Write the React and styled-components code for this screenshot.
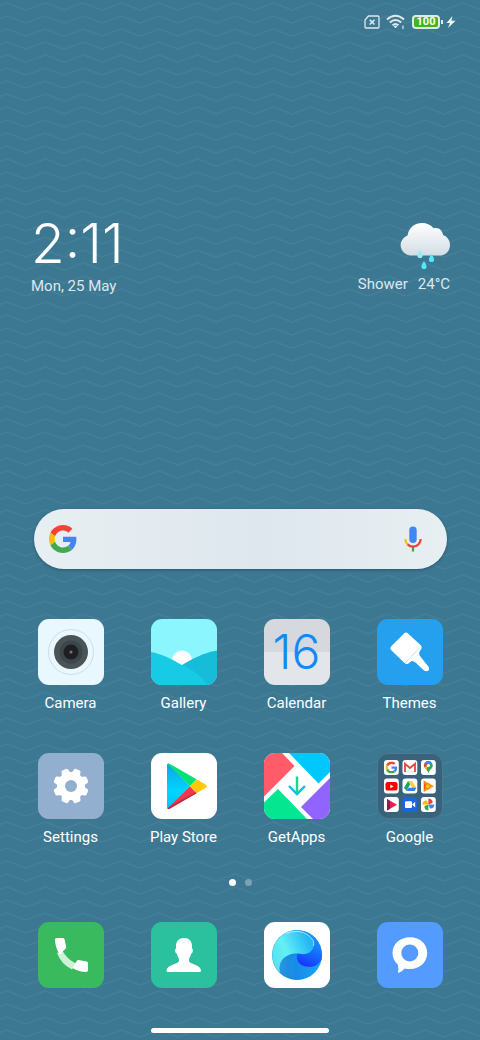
import React from 'react'
import styled, { createGlobalStyle } from 'styled-components'

const zigzag = encodeURIComponent(
  `<svg xmlns="http://www.w3.org/2000/svg" width="38" height="13" viewBox="0 0 38 13">
    <path d="M-12 -3 L7 -10 L26 -3 L45 -10 M-12 10 L7 3 L26 10 L45 3 M-12 23 L7 16 L26 23 L45 16" fill="none" stroke="#9fbccb" stroke-opacity="0.1" stroke-width="1.2"/>
  </svg>`
)

const GlobalStyle = createGlobalStyle`
  * {
    box-sizing: border-box;
  }

  body {
    margin: 0;
    background: #3d7893 url("data:image/svg+xml,${zigzag}");
    color: #fff;
    font-family: Roboto, "Liberation Sans", sans-serif;
  }

  button {
    padding: 0;
    border: none;
    background: none;
    color: inherit;
    font: inherit;
    cursor: pointer;
  }

  svg {
    display: block;
  }
`

const GoogleG = () => (
  <>
    <path fill="#f44336" d="M24 9.5c3.54 0 6.71 1.22 9.21 3.6l6.85-6.85C35.9 2.38 30.47 0 24 0 14.62 0 6.51 5.38 2.56 13.22l7.98 6.19C12.43 13.72 17.74 9.5 24 9.5z" />
    <path fill="#4285f4" d="M46.98 24.55c0-1.57-.15-3.09-.38-4.55H24v9.02h12.94c-.58 2.96-2.26 5.48-4.78 7.18l7.73 6c4.51-4.18 7.09-10.36 7.09-17.65z" />
    <path fill="#fbbc05" d="M10.53 28.59c-.48-1.45-.76-2.99-.76-4.59s.27-3.14.76-4.59l-7.98-6.19C.92 16.46 0 20.12 0 24c0 3.88.92 7.54 2.56 10.78l7.97-6.19z" />
    <path fill="#43a94e" d="M24 48c6.48 0 11.93-2.13 15.89-5.81l-7.73-6c-2.15 1.45-4.92 2.3-8.16 2.3-6.26 0-11.57-4.22-13.47-9.91l-7.98 6.19C6.51 42.62 14.62 48 24 48z" />
  </>
)

const CameraIcon = () => (
  <svg viewBox="0 0 66 66">
    <circle cx="33" cy="33" r="22.5" fill="none" stroke="#c5d6dd" strokeWidth="0.8" />
    <circle cx="33" cy="33" r="17" fill="#4a5355" />
    <circle cx="33" cy="33" r="11.5" fill="#3b474c" />
    <circle cx="33" cy="33" r="7.5" fill="#1f1f22" />
    <circle cx="33" cy="33" r="1.5" fill="#74787a" />
  </svg>
)

const GalleryIcon = () => (
  <svg viewBox="0 0 66 66">
    <circle cx="31" cy="41.5" r="10" fill="#fff" />
    <path d="M66 31.5C52 34 41 40 31 46L24 66H66Z" fill="#16bcd8" />
    <path d="M0 33C10 35 20 39.5 31 46C42 51 51 57 56 66H0Z" fill="#17cbe4" />
  </svg>
)

const ThemesIcon = () => (
  <svg viewBox="0 0 66 66">
    <path fill="#fff" d="M27 14.5Q29 12.5 31 14.5L43.5 26Q46 28.5 43.5 31Q41.5 33.5 42.5 36Q43.5 38 51 47Q53 49.5 51.5 51.5Q49.5 53 47 51.5L38.5 43.5Q36 41.5 34.5 42L31.5 44.5Q29 46 27 43.5L14 31Q12.5 29.5 14 27.5Z" />
    <path d="M28 44L43.5 28" stroke="#7cc3f2" strokeWidth="0.8" strokeDasharray="1 0.6" />
  </svg>
)

const SettingsIcon = () => (
  <svg viewBox="0 0 66 66">
    <g fill="#fff">
      <circle cx="33" cy="33" r="14" />
      {[0, 1, 2, 3, 4, 5, 6, 7].map((n) => (
        <path
          key={n}
          transform={`rotate(${22.5 + n * 45} 33 33)`}
          d="M28.5 20.5L29.6 16.4Q30 15.3 31 15.3H35Q36 15.3 36.4 16.4L37.5 20.5Z"
        />
      ))}
    </g>
    <circle cx="33" cy="33" r="6" fill="#93afcf" />
  </svg>
)

const PlayIcon = () => (
  <svg viewBox="0 0 66 66">
    <defs>
      <linearGradient id="playBlue" x1="0" y1="0" x2="0" y2="1">
        <stop offset="0" stopColor="#0ea4e4" />
        <stop offset="0.6" stopColor="#00d4ff" />
        <stop offset="1" stopColor="#00c4f4" />
      </linearGradient>
    </defs>
    <path d="M16 12Q16 10.5 17.5 10.7L39 33.3L17.5 55.5Q16 56 16 54.5Z" fill="url(#playBlue)" />
    <path d="M16.5 10.8Q17.5 10 19 11L45.5 26.3L39 33.3Z" fill="#05e07a" />
    <path d="M16.5 55.5Q17.5 56.5 19 55.5L45.5 40.3L39 33.3Z" fill="#f3364b" />
    <path d="M45.5 26.3L55.2 32Q57 33.3 55.2 34.6L45.5 40.3L39 33.3Z" fill="#ffc80c" />
    <path d="M16.5 55.5Q17.5 56.5 19 55.5L45.5 40.3L44.5 39.2L18 54Z" fill="#bd2a48" />
  </svg>
)

const GetAppsIcon = () => (
  <svg viewBox="0 0 66 66">
    <path d="M0 0H18L30.5 13L0 43.5Z" fill="#ff5b68" />
    <path d="M25 0L54.5 30.5L66 19V0Z" fill="#00c8ff" />
    <path d="M66 25L37 54L49 66H66Z" fill="#9163ff" />
    <path d="M0 49.5L14 36L43 66H0Z" fill="#04e690" />
    <path d="M25 33L33 41L41 33" fill="none" stroke="#14b9ee" strokeWidth="2.4" />
    <path d="M33 23.5V40" stroke="#12d98e" strokeWidth="2.4" />
  </svg>
)

const FolderIcon = () => (
  <svg viewBox="0 0 66 66">
    {[7, 25.5, 44].map((y) =>
      [7, 25.5, 44].map((x) => (
        <rect key={`${x}-${y}`} x={x} y={y} width="14.8" height="15" rx="3" fill={y === 44 && x === 25.5 ? '#1b66de' : '#fff'} />
      ))
    )}
    <svg x="8.5" y="8.5" width="12" height="12" viewBox="0 0 48 48"><GoogleG /></svg>
    {/* mail */}
    <path d="M28 19V11" stroke="#c9c9cf" strokeWidth="1.2" />
    <path d="M28 19V10.8L33 15L38 10.8V19" fill="none" stroke="#e5463b" strokeWidth="1.8" />
    <path d="M29 19H37" stroke="#d5d5da" strokeWidth="0.8" />
    {/* maps */}
    <path d="M51.4 20.5C51 17 47 15.5 47 12.5A4.4 4.4 0 0 1 55.8 12.5C55.8 15.5 52 17 51.4 20.5Z" fill="#34a853" />
    <path d="M47.5 14.5A4.4 4.4 0 0 1 48 9.5L51 12Z" fill="#ea4335" />
    <path d="M48 9.5A4.4 4.4 0 0 1 54.5 9.5L51 13Z" fill="#4285f4" />
    <path d="M47.5 14.5L51 12L49.5 17Z" fill="#fbbc05" />
    <circle cx="51.4" cy="12.5" r="1.6" fill="#fff" />
    {/* youtube */}
    <rect x="8.5" y="29" width="12" height="8.6" rx="2.2" fill="#f00" />
    <path d="M13.3 31.5V35.3L16.5 33.4Z" fill="#fff" />
    {/* drive */}
    <path d="M31 28H35L29.5 38L27 34.8Z" fill="#16a765" />
    <path d="M31 28H35L39.5 35H35.3Z" fill="#ffcf43" />
    <path d="M29.5 38L31.5 34.8H39.5L37.5 38Z" fill="#3b7ded" />
    {/* play music */}
    <path d="M46.8 27.5L57 33.3L46.8 39Z" fill="#ff9a0c" />
    <path d="M46.8 27.5L48.5 33.3L46.8 39Z" fill="#f4511e" />
    <circle cx="50.8" cy="33.3" r="2.6" fill="#ffc107" stroke="#ef6c00" strokeWidth="0.8" />
    {/* play movies */}
    <path d="M10 46L20 51.8L10 57.5Z" fill="#e5204e" />
    <path d="M10 46L13 48V56L10 57.5Z" fill="#8d1d4f" />
    {/* duo */}
    <rect x="28" y="48.2" width="7" height="6.8" rx="1" fill="#fff" />
    <path d="M35 51.5L38.2 48.8V54.5Z" fill="#fff" />
    {/* photos */}
    <path d="M51.4 51.5V45.5Q56 46 55.5 50Z" fill="#ea4335" />
    <path d="M51.4 51.5H57.4Q57 56 53 55.5Z" fill="#4285f4" />
    <path d="M51.4 51.5V57.5Q47 57 47.5 53Z" fill="#34a853" />
    <path d="M51.4 51.5H45.4Q46 47 50 47.5Z" fill="#fbbc05" />
  </svg>
)

const PhoneIcon = () => (
  <svg viewBox="0 0 66 66">
    <path d="M19 31L24.5 29Q30 38 38 41.5L34 47.5Q23 42 19 31Z" fill="#d0f1d8" />
    <path d="M18.5 16H25Q26.3 16 26.6 17.5L28.2 25Q28.3 26 27.5 26.7L21.8 32.5Q17 25.5 17 17.5Q17 16 18.5 16Z" fill="#fff" />
    <path d="M50 41.3V48Q50 50 48 50Q41 50 34.5 46L38.7 39Q39.3 37.9 40.5 38L48.5 39.5Q50 39.8 50 41.3Z" fill="#fff" />
  </svg>
)

const ContactsIcon = () => (
  <svg viewBox="0 0 66 66">
    <path fill="#fff" d="M33 16C38 16 41 19 41 24V26.5C42.5 27 42 31 40.2 31.8C39.5 34.5 38.5 35.5 38 37V39C38 42 50 43 50 48.5Q50 50 48.5 50H17Q15.5 50 15.5 48.5C15.5 43 28 42 28 39V37C27.5 35.5 26.5 34.5 25.8 31.8C24 31 23.5 27 25 26.5V24C25 19 28 16 33 16Z" />
  </svg>
)

const BrowserIcon = () => (
  <svg viewBox="0 0 66 66">
    <defs>
      <linearGradient id="aqua" x1="0" y1="0.7" x2="0.9" y2="0.3">
        <stop offset="0" stopColor="#58e0f0" />
        <stop offset="0.4" stopColor="#63f0f5" />
        <stop offset="1" stopColor="#22b8f4" />
      </linearGradient>
      <linearGradient id="sea" x1="0" y1="0" x2="1" y2="0">
        <stop offset="0" stopColor="#2f9fdc" />
        <stop offset="0.5" stopColor="#1385e2" />
        <stop offset="1" stopColor="#20b8f6" />
      </linearGradient>
      <linearGradient id="deep" x1="0.6" y1="0" x2="0.3" y2="1">
        <stop offset="0" stopColor="#1aa0f6" />
        <stop offset="0.6" stopColor="#1467fb" />
        <stop offset="1" stopColor="#1a30ff" />
      </linearGradient>
    </defs>
    <circle cx="33" cy="33" r="25" fill="url(#sea)" />
    <path d="M30 57.5C21 47 25 34 34 32L36 43C42 48 51 46 57 39A25 25 0 0 1 30 57.5Z" fill="#1a93ee" opacity="0.5" />
    <path d="M40 9A25 25 0 0 1 57.6 37.5C54 44 48 46 42 44.5C34 43 31 36 34 31Z" fill="url(#deep)" />
    <path d="M16 51A25 25 0 0 1 30 8.2C40 8 50 15 49.8 23C49.5 29 44 33 37 32C27 30 13 35 16 51Z" fill="url(#aqua)" />
    <path d="M22 11.5Q35 6.5 44 13Q51 18 49.6 24" fill="none" stroke="#c6fbff" strokeWidth="0.9" opacity="0.8" />
  </svg>
)

const MessagesIcon = () => (
  <svg viewBox="0 0 66 66">
    <path fill="#fff" fillRule="evenodd" d="M33 15.3C43 15.3 50.2 22 50.2 31S43 47 33 47Q30 47 27.5 46.4Q25 49.5 22 50.8Q20.8 51 21 49.8Q21.8 47 20.8 42.6Q15.5 38 15.5 31C15.5 22 23 15.3 33 15.3ZM32.8 22.5A8.5 8.5 0 1 0 32.8 39.5A8.5 8.5 0 1 0 32.8 22.5Z" />
  </svg>
)

const CalendarDay = () => <DayNumber>16</DayNumber>

const apps = [
  { name: 'Camera', fill: '#e9f8ff', Icon: CameraIcon },
  { name: 'Gallery', fill: '#8cf6ff', Icon: GalleryIcon },
  { name: 'Calendar', fill: 'linear-gradient(#d5d9dd 50%, #e2e6eb 50%)', Icon: CalendarDay },
  { name: 'Themes', fill: '#25a0ee', Icon: ThemesIcon },
  { name: 'Settings', fill: '#93afcf', Icon: SettingsIcon },
  { name: 'Play Store', fill: '#fff', Icon: PlayIcon },
  { name: 'GetApps', fill: '#fff', Icon: GetAppsIcon },
  { name: 'Google', fill: '#38637a', outlined: true, Icon: FolderIcon },
]

const dockApps = [
  { name: 'Phone', fill: '#3aba5e', Icon: PhoneIcon },
  { name: 'Contacts', fill: '#2bc19f', Icon: ContactsIcon },
  { name: 'Browser', fill: '#fff', Icon: BrowserIcon },
  { name: 'Messages', fill: '#539bff', Icon: MessagesIcon },
]

const StatusIcons = () => (
  <StatusBar>
    <svg width="16" height="14" viewBox="0 0 16 14" fill="none" stroke="#dce9ee">
      <path d="M4.5 1H14Q15 1 15 2V12Q15 13 14 13H2Q1 13 1 12V5Z" strokeWidth="1.3" />
      <path d="M5.8 4.8L10.5 9.5M10.5 4.8L5.8 9.5" strokeWidth="1.6" />
    </svg>
    <svg width="20" height="16" viewBox="0 0 20 16" fill="none" stroke="#dce9ee" strokeWidth="2">
      <path d="M1 5.5Q9.5 -2 18 5.5" />
      <path d="M3.8 8.5Q9.5 3.5 15.2 8.5" />
      <path d="M6.5 11.3Q9.5 8.7 12.5 11.3" />
      <path d="M7.5 12.3L9.5 14.3L11.5 12.3Q9.5 10.8 7.5 12.3Z" fill="#dce9ee" stroke="none" />
      <path d="M17 11.5V15" strokeWidth="1.2" />
    </svg>
    <Battery>
      <BatteryLevel>100</BatteryLevel>
      <BatteryTip />
      <svg width="12" height="12" viewBox="0 0 12 12" fill="#eef5f8">
        <path d="M8.5 0L2.5 7H6L4 12L11.5 4.8H7.4Z" />
      </svg>
    </Battery>
  </StatusBar>
)

const App = () => {
  return (
    <>
      <GlobalStyle />
      <Screen>
        <StatusIcons />
        <Widgets>
          <div>
            <Clock>2:11</Clock>
            <WidgetText>Mon, 25 May</WidgetText>
          </div>
          <Weather>
            <svg width="50" height="48" viewBox="0 0 50 48">
              <defs>
                <linearGradient id="cloud" x1="0" y1="0" x2="0" y2="1">
                  <stop offset="0" stopColor="#fff" />
                  <stop offset="1" stopColor="#d3dde5" />
                </linearGradient>
              </defs>
              <path d="M10.5 33.5A10.3 10.3 0 0 1 7.5 13.5C9 5 15 1 22 1C27 1 31 3 33.5 6.3C38.5 5 42.5 8 43 13C47.5 14.5 50 18.5 50 23C50 29 45.5 33.5 40 33.5Z" fill="url(#cloud)" />
              <path d="M20 28Q22.6 31.5 22.6 33.5A2.6 2.6 0 0 1 17.4 33.5Q17.4 31.5 20 28Z" fill="#8ff0f3" />
              <path d="M31.5 32Q34.1 35.5 34.1 37.5A2.6 2.6 0 0 1 28.9 37.5Q28.9 35.5 31.5 32Z" fill="#4feaf5" />
              <path d="M24 39Q26.6 42.5 26.6 44.5A2.6 2.6 0 0 1 21.4 44.5Q21.4 42.5 24 39Z" fill="#4feaf5" />
            </svg>
            <WeatherLine>
              <WidgetText>Shower</WidgetText>
              <WidgetText>24°C</WidgetText>
            </WeatherLine>
          </Weather>
        </Widgets>

        <SearchBar role="search">
          <button type="button" aria-label="Google">
            <svg width="28" height="28" viewBox="0 0 48 48"><GoogleG /></svg>
          </button>
          <SearchInput type="text" aria-label="Search" />
          <button type="button" aria-label="Voice search">
            <svg width="18" height="26" viewBox="0 0 18 26" fill="none">
              <rect x="5.3" y="0.5" width="7.4" height="16.5" rx="3.7" fill="#4285f4" />
              <path d="M9 20V25.5" stroke="#34a853" strokeWidth="2.2" />
              <path d="M1.3 13Q1.3 16.3 3.6 18.4" stroke="#fbbc05" strokeWidth="2.2" />
              <path d="M3.6 18.4Q5.8 20.6 9 20.6Q12.5 20.6 14.6 18.2Q16.7 16 16.7 13" stroke="#ea4335" strokeWidth="2.2" />
            </svg>
          </button>
        </SearchBar>

        <AppGrid>
          {apps.map(({ name, fill, outlined, Icon }) => (
            <AppButton key={name}>
              <Tile $fill={fill} $outlined={outlined}><Icon /></Tile>
              <AppName>{name}</AppName>
            </AppButton>
          ))}
        </AppGrid>

        <Pager>
          <Dot $active />
          <Dot />
        </Pager>

        <Dock>
          {dockApps.map(({ name, fill, Icon }) => (
            <AppButton key={name} aria-label={name}>
              <Tile $fill={fill}><Icon /></Tile>
            </AppButton>
          ))}
        </Dock>
        <HomeBar />
      </Screen>
    </>
  )
}

const Screen = styled.main`
  display: flex;
  flex-direction: column;
  min-height: 100vh;
  padding-bottom: 7px;
`

const StatusBar = styled.header`
  display: flex;
  align-items: center;
  justify-content: flex-end;
  gap: 6px;
  height: 44px;
  padding: 0 24px;
`

const Battery = styled.div`
  display: flex;
  align-items: center;
  gap: 1px;
`

const BatteryLevel = styled.span`
  width: 28px;
  height: 14px;
  border: 2px solid #dce9ee;
  border-radius: 4px;
  background: #45b51c padding-box;
  color: #fff;
  font-size: 11px;
  font-weight: 700;
  line-height: 10px;
  text-align: center;
`

const BatteryTip = styled.span`
  width: 2px;
  height: 4px;
  background: #dce9ee;
`

const Widgets = styled.section`
  display: flex;
  justify-content: space-between;
  margin-top: 166px;
  padding: 0 30px 0 31px;
`

const Clock = styled.time`
  display: block;
  font-family: Inter, Roboto, sans-serif;
  font-size: 55px;
  font-weight: 300;
  line-height: 67px;
`

const WidgetText = styled.span`
  display: block;
  color: #dce8ee;
  font-size: 15px;
  line-height: 18px;
`

const Weather = styled.div`
  display: flex;
  flex-direction: column;
  align-items: flex-end;
  gap: 5px;
  padding-top: 12px;
`

const WeatherLine = styled.div`
  display: flex;
  gap: 10px;
`

const SearchBar = styled.form`
  display: flex;
  align-items: center;
  height: 60px;
  margin: 214px 33px 0 34px;
  padding: 0 25px 0 15px;
  border-radius: 30px;
  background: linear-gradient(90deg, #e8eff2, #dee7ee 55%, #e8eff2);
  box-shadow: 0 1px 3px rgba(20, 50, 65, 0.5);
`

const SearchInput = styled.input`
  flex: 1;
  min-width: 0;
  height: 40px;
  padding: 0 12px;
  border: none;
  outline: none;
  background: transparent;
  font-size: 16px;
`

const AppGrid = styled.section`
  display: grid;
  grid-template-columns: repeat(4, 1fr);
  row-gap: 40px;
  margin-top: 50px;
  padding: 0 14px;
`

const AppButton = styled.button`
  display: flex;
  flex-direction: column;
  align-items: center;
  gap: 8px;
`

const Tile = styled.span`
  display: block;
  width: 66px;
  height: 66px;
  overflow: hidden;
  border-radius: 11px;
  background: ${(props) => props.$fill};
  box-shadow: ${(props) => (props.$outlined ? 'inset 0 0 0 1px #4c7a91' : 'none')};
`

const DayNumber = styled.span`
  display: block;
  color: #1389f8;
  font-family: Inter, Roboto, sans-serif;
  font-size: 48px;
  font-weight: 300;
  line-height: 66px;
  text-align: center;
`

const AppName = styled.span`
  font-size: 15px;
  line-height: 20px;
`

const Pager = styled.div`
  display: flex;
  justify-content: center;
  gap: 9px;
  margin-top: 32px;
`

const Dot = styled.span`
  width: 7px;
  height: 7px;
  border-radius: 50%;
  background: ${(props) => (props.$active ? '#fff' : '#7ba1b3')};
`

const Dock = styled.nav`
  display: grid;
  grid-template-columns: repeat(4, 1fr);
  margin-top: 36px;
  padding: 0 14px;
`

const HomeBar = styled.div`
  width: 37%;
  height: 5px;
  margin: auto auto 0;
  border-radius: 3px;
  background: #fff;
`

export default App
